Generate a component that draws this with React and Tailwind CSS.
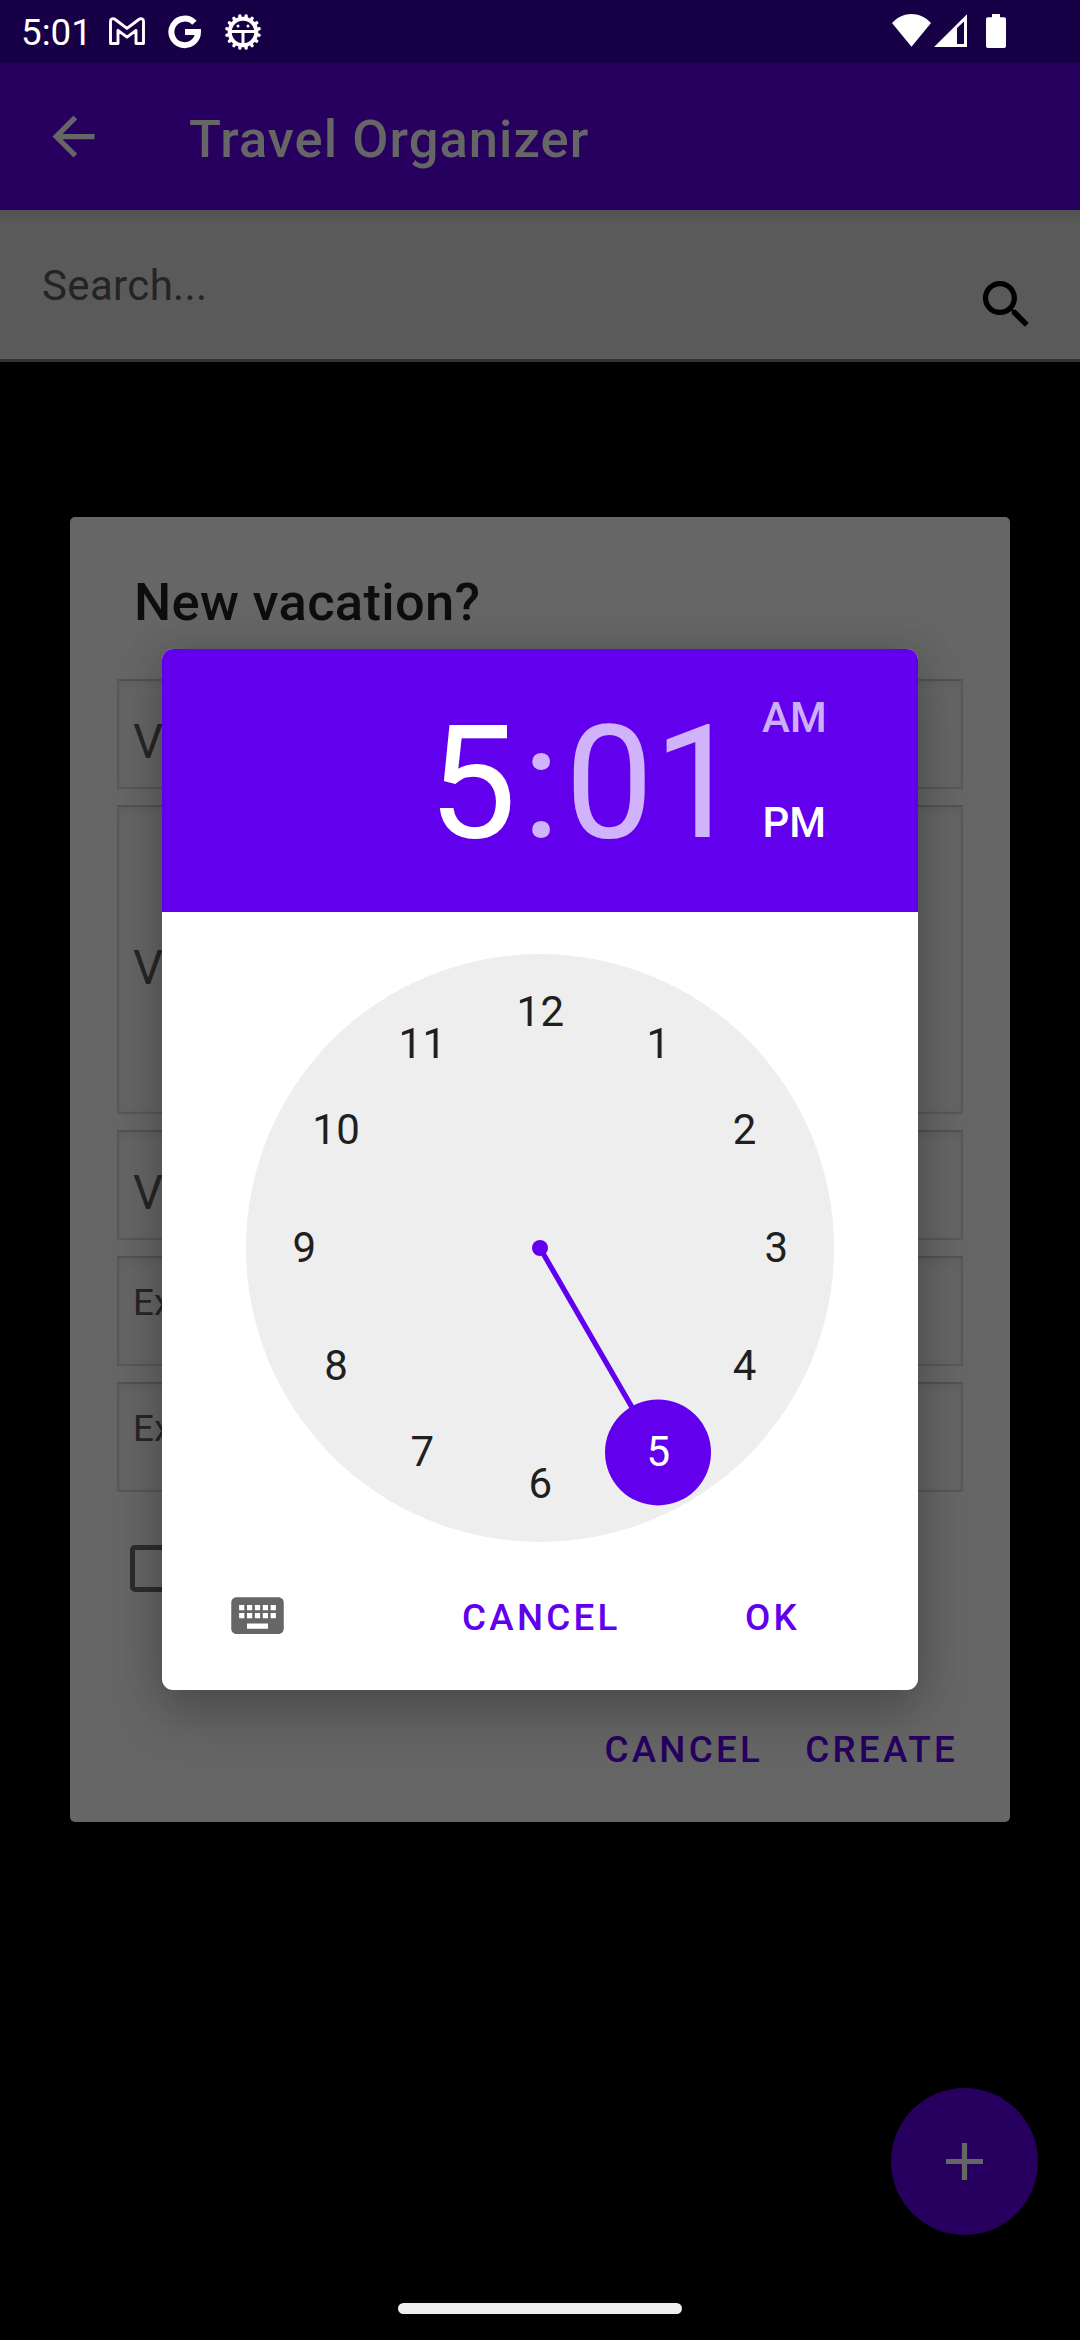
import React from "react";

const CLOCK_NUMBERS = [12, 1, 2, 3, 4, 5, 6, 7, 8, 9, 10, 11];

function GmailIcon() {
  return (
    <svg className="block h-[28px] w-[36px]" viewBox="0 0 36 28" fill="none" stroke="#fff" strokeWidth="2.9" strokeLinejoin="round">
      <path d="M1.500 4.200C1.500 1.700 4 .9 6.200 2.500L18 11.400 29.800 2.500C32 .9 34.500 1.700 34.500 4.200V26.500H27V13.400L18 20.200 9 13.400V26.500H1.500Z" />
    </svg>
  );
}

function GoogleIcon() {
  return (
    <svg className="block h-[34px] w-[34px]" viewBox="0 0 34 34" fill="none" stroke="#fff" strokeWidth="6">
      <path d="M26.4 7.8A13.3 13.3 0 1 0 30 17H17" />
    </svg>
  );
}

function GearIcon() {
  const teeth = Array.from({ length: 16 }, (_, i) => i * 22.5);
  return (
    <svg className="block h-[38px] w-[38px]" viewBox="0 0 38 38" fill="none" stroke="#fff">
      {teeth.map((a) => (
        <path key={a} d="M19 5.5V2.600" strokeWidth="3.4" strokeLinecap="round" transform={`rotate(${a + 11.25} 19 19)`} />
      ))}
      <circle cx="19" cy="19" r="13.3" strokeWidth="4" />
      <path d="M6 18.6H32M19 19V32" strokeWidth="3" />
      <circle cx="14" cy="13" r="1.5" fill="#fff" stroke="none" />
      <circle cx="24" cy="13" r="1.5" fill="#fff" stroke="none" />
    </svg>
  );
}

function StatusBar() {
  return (
    <div className="flex h-[63px] items-start bg-[#170045] text-white">
      <span className="ml-[21px] mt-[13px] w-[88px] text-[36.75px] leading-[40px]">5:01</span>
      <div className="mt-[17px]"><GmailIcon /></div>
      <div className="ml-[23px] mt-[15px]"><GoogleIcon /></div>
      <div className="ml-[22px] mt-[13px]"><GearIcon /></div>
      <svg className="ml-auto mt-[14px] block h-[33px] w-[39px]" viewBox="0 0 39 33" fill="#fff">
        <path d="M0 9C11-3 28-3 39 9L19.500 32.700Z" />
      </svg>
      <svg className="ml-[3px] mt-[14px] block h-[33px] w-[33px]" viewBox="0 0 33 33">
        <path fill="#fff" fillRule="evenodd" d="M0 33 33 .3V33ZM23 14V30H30V7.500Z" />
      </svg>
      <svg className="ml-[19px] mr-[74px] mt-[14px] block h-[34px] w-[20px]" viewBox="0 0 20 34" fill="#fff">
        <path d="M6 0H14V3.300H18A2 2 0 0 1 20 5.300V32A2 2 0 0 1 18 34H2A2 2 0 0 1 0 32V5.300A2 2 0 0 1 2 3.300H6Z" />
      </svg>
    </div>
  );
}

function AppBar() {
  return (
    <div className="flex h-[147px] items-center bg-[#27005f] pl-[42px] text-[#666666]">
      <svg className="block size-[63px]" viewBox="0 0 24 24" fill="currentColor">
        <path d="M20 11H7.830l5.590-5.590L12 4l-8 8 8 8 1.410-1.410L7.830 13H20v-2z" />
      </svg>
      <h1 className="ml-[84px] pt-[5px] text-[52.5px] font-medium leading-[60px] tracking-[1.05px]">Travel Organizer</h1>
    </div>
  );
}

function SearchBar() {
  return (
    <div className="flex h-[152px] justify-between border-b-[3px] border-[#333333] bg-[#5a5a5a] bg-linear-to-b from-[#515151] from-0% to-[#5a5a5a] to-10% pl-[42px] pr-[42px]">
      <span className="mt-[51px] text-[42px] leading-[50px] tracking-[0.35px] text-[#242424]">Search...</span>
      <svg className="mt-[63px] block size-[63px]" viewBox="0 0 24 24" fill="#000">
        <path d="M15.500 14h-.79l-.28-.27C15.410 12.590 16 11.110 16 9.500 16 5.910 13.090 3 9.500 3S3 5.910 3 9.500 5.910 16 9.500 16c1.610 0 3.090-.59 4.230-1.570l.27.28v.79l5 4.990L20.490 19l-4.990-5zm-6 0C7.010 14 5 11.990 5 9.500S7.010 5 9.500 5 14 7.010 14 9.500 11.990 14 9.500 14z" />
      </svg>
    </div>
  );
}

const fieldBox =
  "flex items-center border-2 border-[#585858] border-t-[#525252] pl-[14px] text-[#262626] shadow-[inset_0_3px_8px_rgba(0,0,0,0.07)]";

function VacationDialog() {
  return (
    <div className="flex h-[1305px] w-[940px] flex-col rounded-[5px] bg-[#666666]">
      <h2 className="ml-[64px] mt-[55px] text-[52.5px] font-medium leading-[60px] tracking-[0.3px] text-[#0d0d0d]">New vacation?</h2>
      <div className="mx-[47px] mt-[47px] flex flex-col gap-[16px]">
        <div className={`${fieldBox} h-[110px] pt-[17px] text-[47.25px]`}>V</div>
        <div className={`${fieldBox} h-[309px] pt-[17px] text-[47.25px]`}>V</div>
        <div className={`${fieldBox} h-[110px] pt-[17px] text-[47.25px]`}>V</div>
        <div className={`${fieldBox} h-[110px] pb-[16px] text-[36.75px]`}>Ex</div>
        <div className={`${fieldBox} h-[110px] pb-[16px] text-[36.75px]`}>Ex</div>
      </div>
      <div className="ml-[60px] mt-[53px] size-[47px] rounded-[5px] border-[5px] border-[#2d2d2d]" />
      <div className="mr-[52px] mt-[138px] flex justify-end gap-[42px] text-[36.75px] font-medium leading-[40px] tracking-[3.28px] text-[#27005f]">
        <span>CANCEL</span>
        <span>CREATE</span>
      </div>
    </div>
  );
}

function ClockFace() {
  return (
    <svg className="mx-auto mt-[42px] block size-[588px]" viewBox="-294 -294 588 588">
      <circle r="294" fill="#eeeeee" />
      <circle r="8" fill="#6200ee" />
      <path d="M0 0 118 204.400" stroke="#6200ee" strokeWidth="5.25" />
      <circle cx="118" cy="204.400" r="53" fill="#6200ee" />
      {CLOCK_NUMBERS.map((n) => {
        const a = (n * Math.PI) / 6;
        return (
          <text
            key={n}
            x={236 * Math.sin(a) + 0.5}
            y={-236 * Math.cos(a) + 14}
            textAnchor="middle"
            fontSize="42"
            letterSpacing="0.4"
            fill={n === 5 ? "#ffffff" : "#1f1f1f"}
          >
            {n}
          </text>
        );
      })}
    </svg>
  );
}

function TimePicker() {
  return (
    <div className="flex h-[1041px] w-[756px] flex-col overflow-hidden rounded-[11px] bg-white shadow-[0_26px_52px_rgba(0,0,0,0.22),0_0_44px_rgba(0,0,0,0.12)]">
      <div className="flex h-[263px] bg-[#6200ee] text-white">
        <div className="ml-[266px] mt-[44px] flex text-[157.5px] leading-[180px]">
          <span className="w-[89px]">5</span>
          <span className="w-[48px] text-center text-white/70">:</span>
          <span className="text-white/70">01</span>
        </div>
        <div className="ml-[20px] mt-[44px] flex flex-col gap-[55px] text-center text-[42px] font-medium leading-[50px]">
          <span className="text-white/70">AM</span>
          <span>PM</span>
        </div>
      </div>
      <ClockFace />
      <div className="mt-[42px] flex items-start text-[36.75px] font-medium leading-[40px] tracking-[3.28px] text-[#6200ee]">
        <svg className="ml-[64px] block size-[63px]" viewBox="0 0 24 24" fill="#666666">
          <path d="M20 5H4c-1.100 0-1.990.9-1.990 2L2 17c0 1.100.9 2 2 2h16c1.100 0 2-.9 2-2V7c0-1.100-.9-2-2-2zm-9 3h2v2h-2V8zm0 3h2v2h-2v-2zM8 8h2v2H8V8zm0 3h2v2H8v-2zm-1 2H5v-2h2v2zm0-3H5V8h2v2zm9 7H8v-2h8v2zm0-4h-2v-2h2v2zm0-3h-2V8h2v2zm3 3h-2v-2h2v2zm0-3h-2V8h2v2z" />
        </svg>
        <span className="ml-[173px] mt-[14px] w-[283px]">CANCEL</span>
        <span className="mt-[14px]">OK</span>
      </div>
    </div>
  );
}

export default function App() {
  return (
    <div className="relative flex h-[2340px] w-[1080px] flex-col overflow-hidden bg-black font-[Roboto,sans-serif]">
      <StatusBar />
      <AppBar />
      <SearchBar />
      <div className="mb-[68px] mr-[42px] mt-auto flex size-[147px] items-center justify-center self-end rounded-full bg-[#27005f]">
        <svg className="block size-[37px]" viewBox="0 0 37 37" stroke="#666666" strokeWidth="5.2">
          <path d="M18.500 0V37M0 18.500H37" />
        </svg>
      </div>
      <div className="mx-auto mb-[26px] h-[11px] w-[284px] rounded-full bg-[#eeeeee]" />
      <div className="absolute inset-0 flex items-center justify-center pb-px">
        <VacationDialog />
      </div>
      <div className="absolute inset-0 flex items-center justify-center pb-px">
        <TimePicker />
      </div>
    </div>
  );
}
